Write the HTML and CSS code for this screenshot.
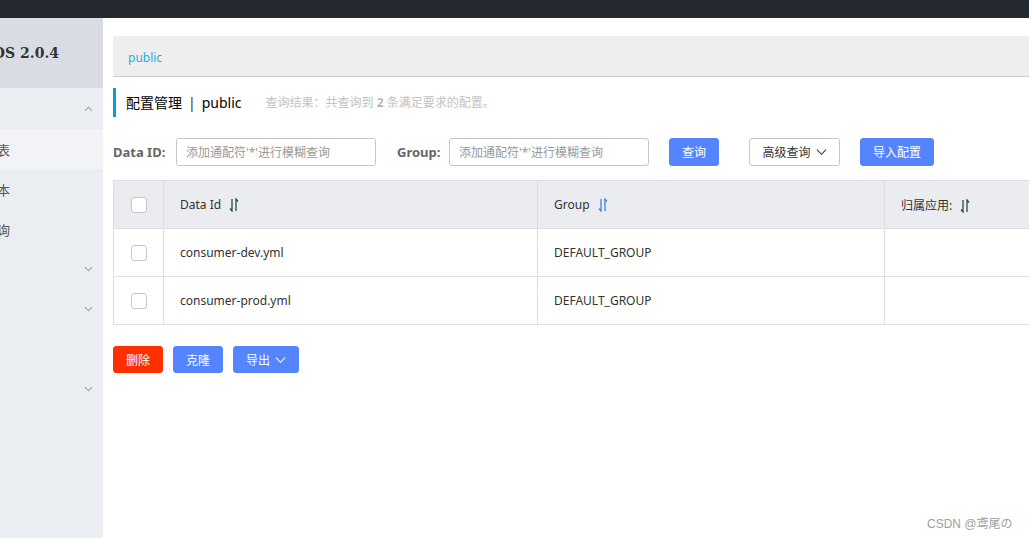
FILE: index.html
```html
<!DOCTYPE html>
<html lang="zh">
<head>
<meta charset="utf-8">
<title>Nacos 配置管理</title>
<link rel="stylesheet" href="styles.css">
</head>
<body>
<div class="topbar"></div>
<div class="layout">
  <aside class="sidebar">
    <div class="side-inner">
      <div class="brand">NACOS 2.0.4</div>
      <ul class="menu">
        <li class="group open">配置管理<svg class="chev" viewBox="0 0 10 6"><path d="M1 5 L5 1 L9 5" /></svg></li>
        <li class="sub active">配置列表</li>
        <li class="sub">历史版本</li>
        <li class="sub">监听查询</li>
        <li class="group">服务管理<svg class="chev" viewBox="0 0 10 6"><path d="M1 1 L5 5 L9 1" /></svg></li>
        <li class="group">权限控制<svg class="chev" viewBox="0 0 10 6"><path d="M1 1 L5 5 L9 1" /></svg></li>
        <li class="group">命名空间</li>
        <li class="group">集群管理<svg class="chev" viewBox="0 0 10 6"><path d="M1 1 L5 5 L9 1" /></svg></li>
      </ul>
    </div>
  </aside>
  <main class="main">
    <div class="content">
      <div class="crumb"><span class="crumb-link">public</span></div>
      <div class="title-row">
        <span class="title">配置管理<span class="sep">|</span>public</span>
        <span class="summary">查询结果：共查询到 <b>2</b> 条满足要求的配置。</span>
      </div>
      <div class="search-row">
        <label class="lbl lbl-id">Data ID:</label>
        <div class="input">添加通配符'*'进行模糊查询</div>
        <label class="lbl lbl-group">Group:</label>
        <div class="input">添加通配符'*'进行模糊查询</div>
        <button class="btn primary btn-query">查询</button>
        <button class="btn normal btn-adv">高级查询<svg class="btn-chev" viewBox="0 0 12 8"><path d="M1 1.5 L6 6.5 L11 1.5" /></svg></button>
        <button class="btn primary btn-import">导入配置</button>
      </div>
      <table class="grid">
        <colgroup>
          <col class="c-check"><col class="c-id"><col class="c-group"><col class="c-app">
        </colgroup>
        <thead>
          <tr>
            <th class="cell-check"><span class="checkbox"></span></th>
            <th>Data Id<svg class="sort sort-dark" viewBox="0 0 10 14"><path d="M3 1 V13 L1 10.5 M7 13 V1 L9 3.5" /></svg></th>
            <th>Group<svg class="sort sort-blue" viewBox="0 0 10 14"><path d="M3 1 V13 L1 10.5 M7 13 V1 L9 3.5" /></svg></th>
            <th>归属应用:<svg class="sort sort-dark" viewBox="0 0 10 14"><path d="M3 1 V13 L1 10.5 M7 13 V1 L9 3.5" /></svg></th>
          </tr>
        </thead>
        <tbody>
          <tr>
            <td class="cell-check"><span class="checkbox"></span></td>
            <td>consumer-dev.yml</td>
            <td>DEFAULT_GROUP</td>
            <td></td>
          </tr>
          <tr>
            <td class="cell-check"><span class="checkbox"></span></td>
            <td>consumer-prod.yml</td>
            <td>DEFAULT_GROUP</td>
            <td></td>
          </tr>
        </tbody>
      </table>
      <div class="actions">
        <button class="btn danger btn-del">删除</button>
        <button class="btn primary btn-clone">克隆</button>
        <button class="btn primary btn-export">导出<svg class="btn-chev" viewBox="0 0 12 8"><path d="M1 1.5 L6 6.5 L11 1.5" /></svg></button>
      </div>
    </div>
  </main>
</div>
<div class="watermark">CSDN @鸢尾の</div>
</body>
</html>
```
FILE: styles.css
```css
* { box-sizing: border-box; }
html, body {
  margin: 0;
  padding: 0;
  width: 1029px;
  height: 538px;
  overflow: hidden;
  background: #fff;
  font-family: "Noto Sans", "Noto Sans CJK SC", sans-serif;
  font-size: 12px;
  color: #333;
}
.topbar {
  height: 18px;
  background: #23292e;
}
.layout {
  display: flex;
  height: 520px;
}
.sidebar {
  width: 103px;
  flex: none;
  overflow: hidden;
  background: #eaedf1;
}
.side-inner {
  width: 180px;
  margin-left: -77px;
}
.brand {
  height: 70px;
  background: #d9dde3;
  display: flex;
  align-items: center;
  justify-content: flex-end;
  padding-right: 44px;
  font-family: "DejaVu Serif", serif;
  font-weight: bold;
  font-size: 14px;
  color: #333;
}
.menu {
  list-style: none;
  margin: 0;
  padding: 1px 0 0;
}
.menu li {
  height: 40px;
  display: flex;
  align-items: center;
  position: relative;
  font-size: 13px;
  color: #555;
}
.menu .group { padding-left: 14px; }
.menu .sub { padding-left: 35px; }
.menu .active { background: #f2f3f7; }
.chev {
  position: absolute;
  right: 10px;
  top: 17px;
  width: 9px;
  height: 6px;
  fill: none;
  stroke: #9a9fa8;
  stroke-width: 1.2;
}
.main {
  flex: 1;
  overflow: hidden;
  padding: 18px 0 0 10px;
}
.content {
  width: 1000px;
}
.crumb {
  height: 41px;
  background: #eeeeee;
  border-bottom: 1px solid #cfcfcf;
  display: flex;
  align-items: center;
  padding: 3px 0 0 15px;
}
.crumb-link {
  color: #1ab2dc;
  font-size: 12px;
}
.title-row {
  margin-top: 11px;
  height: 29px;
  border-left: 3px solid #0f9ad2;
  display: flex;
  align-items: center;
  padding-left: 10px;
  padding-bottom: 2px;
}
.title {
  font-size: 14px;
  color: #000;
}
.sep {
  margin: 0 6px;
  color: #333;
}
.summary {
  margin-left: 24px;
  color: #c2c2c2;
  font-size: 12px;
}
.summary b { color: #b5b5b5; }
.search-row {
  margin-top: 21px;
  display: flex;
  align-items: center;
  height: 28px;
}
.lbl {
  font-size: 13px;
  font-weight: bold;
  color: #666;
}
.lbl-id { width: 63px; }
.lbl-group { margin-left: 21px; width: 52px; }
.input {
  width: 200px;
  height: 28px;
  border: 1px solid #c4c6cf;
  border-radius: 3px;
  padding-left: 9px;
  display: flex;
  align-items: center;
  color: #999;
  font-size: 12px;
}
.btn {
  height: 28px;
  border-radius: 3px;
  font-family: inherit;
  font-size: 12px;
  display: inline-flex;
  align-items: center;
  justify-content: center;
  padding: 0;
  cursor: pointer;
}
.primary {
  background: #5584ff;
  border: 1px solid #5584ff;
  color: #fff;
}
.danger {
  background: #ff3000;
  border: 1px solid #ff3000;
  color: #fff;
}
.normal {
  background: #fff;
  border: 1px solid #c4c6cf;
  color: #333;
}
.btn-query { margin-left: 20px; width: 50px; }
.btn-adv { margin-left: 30px; width: 91px; }
.btn-import { margin-left: 20px; width: 74px; }
.btn-chev {
  width: 11px;
  height: 8px;
  margin-left: 5px;
  fill: none;
  stroke: currentColor;
  stroke-width: 1.2;
}
.btn-adv .btn-chev { stroke: #1d3a70; }
.grid {
  margin-top: 14px;
  width: 1000px;
  border-collapse: collapse;
  table-layout: fixed;
  border: 1px solid #dcdee3;
}
.c-check { width: 50px; }
.c-id { width: 374px; }
.c-group { width: 347px; }
.grid th, .grid td {
  border: 1px solid #dcdee3;
  text-align: left;
  font-weight: normal;
  font-size: 12px;
  color: #333;
  padding: 0 16px;
}
.grid th {
  height: 48px;
  background: #ebecf0;
}
.grid td {
  height: 48px;
}
.grid .cell-check {
  padding: 0;
  text-align: center;
}
.checkbox {
  display: inline-block;
  width: 16px;
  height: 16px;
  border: 1px solid #c4c6cf;
  border-radius: 3px;
  background: #fff;
  vertical-align: middle;
}
.sort {
  width: 10px;
  height: 14px;
  margin-left: 8px;
  vertical-align: -3px;
  fill: none;
  stroke-width: 1.3;
}
.sort-dark { stroke: #2c4d3a; }
.sort-blue { stroke: #3c87e0; }
.actions {
  margin-top: 21px;
  display: flex;
  gap: 10px;
}
.btn-del, .btn-clone { width: 50px; height: 27px; }
.btn-export { width: 66px; height: 27px; }
.watermark {
  position: absolute;
  left: 927px;
  top: 514px;
  font-family: "Liberation Sans", "Noto Sans CJK SC", sans-serif;
  font-size: 12px;
  color: #a0a0a0;
}
```
